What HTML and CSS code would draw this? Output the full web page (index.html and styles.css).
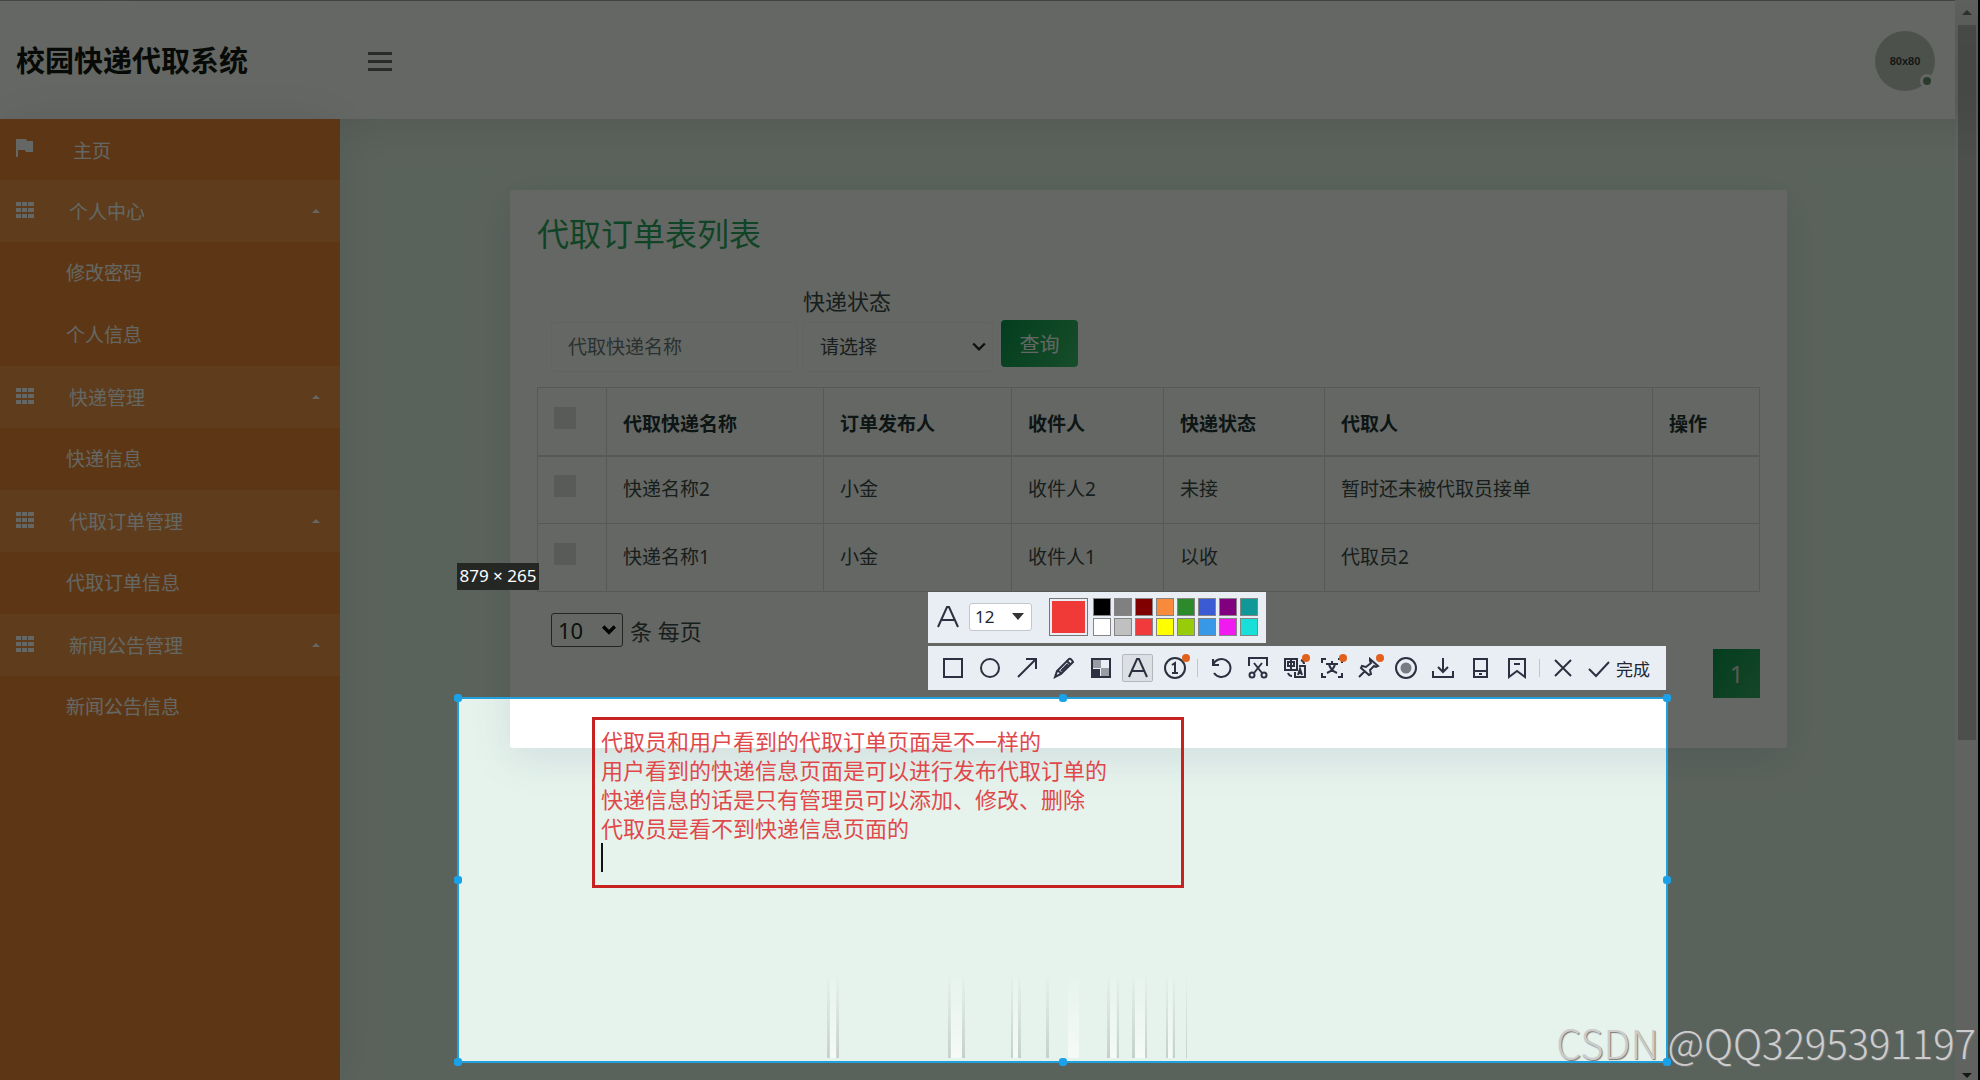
FILE: index.html
```html
<!DOCTYPE html>
<html lang="zh-CN">
<head>
<meta charset="utf-8">
<title>校园快递代取系统</title>
<link rel="stylesheet" href="styles.css">
</head>
<body>
<svg class="defs" width="0" height="0" aria-hidden="true">
  <symbol id="grid" viewBox="0 0 18 18"><path fill="currentColor" d="M0 1h5v4H0zM6 1h5v4H6zM12 1h6v4h-6zM0 7h5v4H0zM6 7h5v4H6zM12 7h6v4h-6zM0 13h5v4H0zM6 13h5v4H6zM12 13h6v4h-6z"/></symbol>
</svg>
<div class="window">
  <div class="app">
    <header class="topbar">
      <h1 class="brand">校园快递代取系统</h1>
      <button class="menu-toggle" aria-label="菜单"><span></span><span></span><span></span></button>
      <div class="avatar"><span class="avatar-text">80x80</span><span class="status"></span></div>
    </header>
    <div class="body">
      <nav class="sidebar">
        <a class="group home" href="#"><svg class="icon" viewBox="0 0 18 18"><path fill="currentColor" d="M0 0h10l1 2h6v11h-7l-1-2H2v7H0z"/></svg><span>主页</span></a>
        <a class="group" href="#"><svg class="icon"><use href="#grid"/></svg><span>个人中心</span><i class="caret"></i></a>
        <a class="sub" href="#">修改密码</a>
        <a class="sub" href="#">个人信息</a>
        <a class="group" href="#"><svg class="icon"><use href="#grid"/></svg><span>快递管理</span><i class="caret"></i></a>
        <a class="sub" href="#">快递信息</a>
        <a class="group" href="#"><svg class="icon"><use href="#grid"/></svg><span>代取订单管理</span><i class="caret"></i></a>
        <a class="sub" href="#">代取订单信息</a>
        <a class="group" href="#"><svg class="icon"><use href="#grid"/></svg><span>新闻公告管理</span><i class="caret"></i></a>
        <a class="sub" href="#">新闻公告信息</a>
      </nav>
      <main class="content">
        <section class="card">
          <h2 class="card-title">代取订单表列表</h2>
          <form class="filters">
            <input class="field name-field" type="text" placeholder="代取快递名称" aria-label="代取快递名称">
            <div class="state">
              <label for="state">快递状态</label>
              <div class="picker"><select class="field" id="state"><option>请选择</option></select><svg class="chevron" viewBox="0 0 12 8"><path d="M1 1l5 5 5-5"/></svg></div>
            </div>
            <button class="query" type="button">查询</button>
          </form>
          <table class="orders">
            <colgroup><col class="c1"><col class="c2"><col class="c3"><col class="c4"><col class="c5"><col class="c6"><col class="c7"></colgroup>
            <thead><tr><th><input type="checkbox" aria-label="全选"></th><th>代取快递名称</th><th>订单发布人</th><th>收件人</th><th>快递状态</th><th>代取人</th><th>操作</th></tr></thead>
            <tbody>
              <tr><td><input type="checkbox" aria-label="选择"></td><td>快递名称2</td><td>小金</td><td>收件人2</td><td>未接</td><td>暂时还未被代取员接单</td><td></td></tr>
              <tr><td><input type="checkbox" aria-label="选择"></td><td>快递名称1</td><td>小金</td><td>收件人1</td><td>以收</td><td>代取员2</td><td></td></tr>
            </tbody>
          </table>
          <div class="page-size">
            <div class="picker"><select id="size"><option>10</option></select><svg class="chevron" viewBox="0 0 12 8"><path d="M1 1l5 5 5-5"/></svg></div>
            <label for="size">条 每页</label>
          </div>
          <div class="pager"><button>1</button></div>
        </section>
      </main>
    </div>
  </div>
  <div class="scrollbar"><i class="up"></i><i class="thumb"></i><i class="down"></i></div>
</div>

<div class="capture">
  <svg class="streaks" viewBox="0 0 370 84">
    <defs>
      <linearGradient id="dark" x2="0" y2="1"><stop offset="0" stop-color="#8a938e" stop-opacity="0"/><stop offset="1" stop-color="#8a938e" stop-opacity=".36"/></linearGradient>
      <linearGradient id="light" x2="0" y2="1"><stop offset="0" stop-color="#fff" stop-opacity="0"/><stop offset="1" stop-color="#fff" stop-opacity=".6"/></linearGradient>
    </defs>
    <g fill="url(#light)"><path d="M9 0h8v84H9zM130 0h12v84h-12zM193 0h5v84h-5zM248 0h11v84h-11zM290 0h6v84h-6zM315 0h10v84h-10zM348 0h4v84h-4z"/></g>
    <g fill="url(#dark)"><path d="M7 0h3v84H7zM16 0h3v84h-3zM128 0h3v84h-3zM142 0h3v84h-3zM191 0h2v84h-2zM198 0h3v84h-3zM226 0h3v84h-3zM287 0h3v84h-3zM297 0h2v84h-2zM312 0h3v84h-3zM325 0h2v84h-2zM346 0h2v84h-2zM353 0h2v84h-2zM366 0h1v84h-1z"/></g>
  </svg>
  <i class="handle tl"></i><i class="handle tm"></i><i class="handle tr"></i><i class="handle ml"></i><i class="handle mr"></i><i class="handle bl"></i><i class="handle bm"></i><i class="handle br"></i>
  <span class="size-tag">879 × 265</span>
  <div class="note">
    <p>代取员和用户看到的代取订单页面是不一样的</p>
    <p>用户看到的快递信息页面是可以进行发布代取订单的</p>
    <p>快递信息的话是只有管理员可以添加、修改、删除</p>
    <p>代取员是看不到快递信息页面的</p>
    <i class="text-caret"></i>
  </div>
  <div class="tools">
    <div class="panel text-panel">
      <svg class="tool" viewBox="0 0 22 22"><path d="M1 21L10 1h2l9 20M5 14h12"/></svg>
      <div class="font-size"><select aria-label="字号"><option>12</option></select><i></i></div>
      <button class="current" aria-label="当前颜色"></button>
      <div class="swatches">
        <button class="s-black" aria-label="黑"></button><button class="s-gray" aria-label="灰"></button><button class="s-maroon" aria-label="深红"></button><button class="s-orange" aria-label="橙"></button><button class="s-green" aria-label="绿"></button><button class="s-blue" aria-label="蓝"></button><button class="s-purple" aria-label="紫"></button><button class="s-teal" aria-label="青"></button>
        <button class="s-white" aria-label="白"></button><button class="s-silver" aria-label="银"></button><button class="s-red" aria-label="红"></button><button class="s-yellow" aria-label="黄"></button><button class="s-lime" aria-label="黄绿"></button><button class="s-sky" aria-label="天蓝"></button><button class="s-pink" aria-label="粉"></button><button class="s-cyan" aria-label="浅青"></button>
      </div>
    </div>
    <div class="panel tool-panel">
      <button aria-label="矩形"><svg viewBox="0 0 22 22"><path d="M2 2h18v18H2z"/></svg></button>
      <button aria-label="椭圆"><svg viewBox="0 0 22 22"><circle cx="11" cy="11" r="9"/></svg></button>
      <button aria-label="箭头"><svg viewBox="0 0 22 22"><path d="M2 20L20 2M10 2h10v10"/></svg></button>
      <button aria-label="画笔"><svg viewBox="0 0 22 22"><path d="M2 20l2-6L16 2q2-1 4 3L8 17zM14 4l4 4M4 14q3 0 4 3M8 14l7-7"/></svg></button>
      <button aria-label="马赛克"><svg viewBox="0 0 22 22"><path class="soft" d="M2 2h9v9H2zM11 11h9v9h-9z"/><path d="M2 2h18v18H2z"/><path class="solid" d="M3 12h7v7H3z"/></svg></button>
      <button class="active" aria-label="文字"><svg viewBox="0 0 22 22"><path d="M2 20L10 2h2l8 18M5 14h12"/></svg></button>
      <button class="new" aria-label="序号"><svg viewBox="0 0 22 22"><circle cx="11" cy="11" r="10"/><path d="M8 8l3-2v10M8 16h6"/></svg></button>
      <i class="divider"></i>
      <button aria-label="撤销"><svg viewBox="0 0 22 22"><path d="M3 2v6h6M3 8a9 9 0 1 1 1 8"/></svg></button>
      <button aria-label="裁剪"><svg viewBox="0 0 22 22"><path d="M2 9V1h18v8M7 6l8 10M15 6L7 16"/><circle cx="5" cy="18" r="2.5"/><circle cx="17" cy="18" r="2.5"/></svg></button>
      <button class="new" aria-label="翻译"><svg viewBox="0 0 22 22"><path d="M1 2h12v11H1zM4 5h6v4H4zM7 3v9M15 9h6v11H11v-5M14 18l2-6 2 6M15 16h3M4 16q1 3 4 3M17 3q3 1 3 4"/></svg></button>
      <button class="new" aria-label="文字识别"><svg viewBox="0 0 22 22"><path d="M1 6V2h4M17 2h4v4M1 16v4h4M17 20h4v-4M11 4v3M5 7h12M8 7q1 6 8 9M14 7q-1 6-8 9"/></svg></button>
      <button class="new" aria-label="钉住"><svg viewBox="0 0 22 22"><path d="M12 2l8 7-2 1-2-1-4 4 1 4-2 1-8-7 1-2 4 1 5-4-1-2zM7 14l-6 6"/></svg></button>
      <button aria-label="录屏"><svg viewBox="0 0 22 22"><circle cx="11" cy="11" r="10"/><circle class="dot" cx="11" cy="11" r="5.5"/></svg></button>
      <button aria-label="下载"><svg viewBox="0 0 22 22"><path d="M11 1v14M6 10l5 5 5-5M1 14v6h20v-6"/></svg></button>
      <button aria-label="发送到手机"><svg viewBox="0 0 22 22"><path d="M5 2h13v18H5zM5 14h13M10 17h3"/></svg></button>
      <button aria-label="收藏"><svg viewBox="0 0 22 22"><path d="M3 2h16v18l-8-6-8 6zM8 7h6"/></svg></button>
      <i class="divider"></i>
      <button aria-label="关闭"><svg viewBox="0 0 22 22"><path d="M3 3l16 16M19 3L3 19"/></svg></button>
      <button class="done"><svg viewBox="0 0 22 22"><path d="M1 12l7 7L21 5"/></svg>完成</button>
    </div>
  </div>
</div>
<div class="watermark">CSDN @QQ3295391197</div>
</body>
</html>
```
FILE: styles.css
```css
* { box-sizing: border-box; }
body {
  margin: 0;
  position: relative;
  min-height: 100vh;
  overflow: hidden;
  font-family: "Noto Sans", "Noto Sans CJK SC", sans-serif;
  font-size: 19px;
  color: #3c454c;
}
button, input, select { font: inherit; color: inherit; }
button { padding: 0; border: 0; background: none; }
select { appearance: none; }
p, h1, h2 { margin: 0; }
.defs { position: absolute; }

/* page */
.window { display: flex; min-height: 100vh; background: #000; }
.app { flex: 1; display: flex; flex-direction: column; border-top: 1px solid #aaa; }
.topbar {
  position: relative;
  z-index: 1;
  display: flex;
  align-items: center;
  height: 118px;
  padding: 2px 20px 0 16px;
  background: #fff;
  box-shadow: 120px 10px 40px rgba(0, 0, 0, .09);
}
.brand { width: 352px; font-size: 29px; font-weight: 700; line-height: 40px; color: #111; }
.menu-toggle { display: grid; gap: 5px; width: 24px; }
.menu-toggle span { height: 3px; background: #666; }
.avatar {
  position: relative;
  display: grid;
  place-items: center;
  width: 60px;
  height: 60px;
  margin-left: auto;
  border-radius: 50%;
  background: #c4c6c4;
  font: 700 11px "Liberation Sans", sans-serif;
  color: #333;
}
.status {
  position: absolute;
  right: 1px;
  bottom: 3px;
  width: 14px;
  height: 14px;
  border: 3px solid #fff;
  border-radius: 50%;
  background: #6b8f78;
}
.body { flex: 1; display: flex; }
.sidebar { position: relative; z-index: 2; width: 340px; background: #ee8336; box-shadow: 0 0 50px rgba(0, 0, 0, .08); color: #fff; }
.sidebar a { display: flex; align-items: center; color: inherit; text-decoration: none; }
.group { height: 62px; padding: 0 20px 0 16px; background: #f0914a; }
.group span { margin-left: 35px; }
.home { height: 61px; background: none; }
.home span { margin-left: 39px; }
.icon { width: 18px; height: 18px; margin-bottom: 3px; }
.caret { margin-left: auto; border: 4px solid transparent; border-top: 0; border-bottom-color: currentColor; }
.sub { height: 62px; padding: 0 0 2px 66px; }
.content { flex: 1; padding: 71px 168px 0 170px; background: #e6f3ec; }
.card { min-height: 558px; padding: 20px 27px; background: #fff; box-shadow: 0 10px 40px rgba(80, 100, 150, .14); border-radius: 3px; }
.card-title { border-bottom: 1px solid #f9fafa; font-size: 32px; font-weight: 400; line-height: 47px; color: #2ba562; }
.filters { display: flex; align-items: flex-end; height: 114px; padding-left: 14px; }
.field { height: 50px; padding: 0 16px; border: 1px solid #f5f5f5; border-radius: 4px; background: #fff; }
.name-field { width: 246px; margin-right: 6px; }
.name-field::placeholder { color: #6c757d; opacity: 1; }
.state label { display: block; font-size: 22px; line-height: 42px; }
.picker { position: relative; }
.picker select { width: 100%; }
.chevron { position: absolute; right: 7px; top: 50%; width: 14px; height: 10px; margin-top: -5px; fill: none; stroke: #222; stroke-width: 2; pointer-events: none; }
.state { width: 190px; margin-right: 8px; }
.query { width: 77px; height: 47px; margin-bottom: 5px; border-radius: 4px; background: linear-gradient(120deg, #07954f, #38bd6c); font-size: 20px; color: #fff; }
.orders { width: 100%; margin-top: 15px; table-layout: fixed; border-collapse: collapse; text-align: left; }
.c1 { width: 69px; } .c2 { width: 217px; } .c3 { width: 188px; } .c4 { width: 152px; } .c5 { width: 161px; } .c7 { width: 107px; }
.orders th, .orders td { height: 68px; padding: 0 16px 4px; border: 1px solid #d9dde0; }
.orders th { padding: 4px 16px 0; border-bottom-width: 2px; font-weight: 700; color: #222c36; }
.orders input { display: block; appearance: none; width: 22px; height: 22px; margin: 0 0 4px; background: #dfe1e3; }
.orders th input { margin-bottom: 10px; }
.page-size { display: flex; align-items: center; gap: 7px; margin-top: 21px; padding-left: 14px; font-size: 22px; }
.page-size .picker { width: 72px; }
.page-size select { display: block; height: 34px; padding: 0 6px; border: 1px solid #555; border-radius: 3px; background: #fff; color: #222; }
.page-size .chevron { stroke: #000; stroke-width: 3; }
.pager { display: flex; justify-content: flex-end; margin-top: 2px; }
.pager button { width: 47px; height: 49px; background: linear-gradient(120deg, #07954f, #38a868); font-size: 24px; color: #ddd; }
.scrollbar { display: flex; flex-direction: column; align-items: center; width: 23px; margin-right: 2px; background: #f4f4f4; }
.scrollbar i { border: 5px solid transparent; }
.scrollbar .up { margin-top: 10px; border-top: 0; border-bottom-color: #777; }
.scrollbar .thumb { width: 18px; height: 715px; margin-top: 10px; border: 0; background: #c1c1c1; }
.scrollbar .down { margin: auto 0 2px; border-bottom: 0; border-top-color: #333; }

/* screenshot selection floating above the page */
.capture {
  position: absolute;
  z-index: 5;
  left: 457px;
  top: 697px;
  width: 1211px;
  height: 366px;
  border: 2px solid #21a0dc;
  box-shadow: 0 0 0 3000px rgba(2, 6, 0, .61);
}
.handle { position: absolute; width: 8px; height: 8px; border-radius: 3px; background: #1ba1e8; }
.tl, .tm, .tr { top: -5px; }
.bl, .bm, .br { bottom: -5px; }
.ml, .mr { top: calc(50% - 4px); }
.tl, .ml, .bl { left: -5px; }
.tr, .mr, .br { right: -5px; }
.tm, .bm { left: calc(50% - 4px); }
.size-tag { position: absolute; left: -2px; top: -136px; width: 82px; padding-bottom: 2px; background: #252725; color: #fff; font-size: 17px; line-height: 25px; text-align: center; white-space: nowrap; }
.streaks { position: absolute; left: 361px; bottom: 3px; width: 370px; height: 84px; }
.note { position: absolute; left: 133px; top: 18px; width: 592px; height: 171px; padding: 7px 6px; border: 3px solid #c62222; color: #e0484a; font-size: 22px; line-height: 29px; }
.text-caret { display: block; width: 2px; height: 29px; background: #111; }
.tools { position: absolute; right: 0; bottom: calc(100% + 9px); width: 738px; display: grid; gap: 3px; }
.panel { display: flex; align-items: center; background: #e9eef4; color: #222633; }
.panel svg { display: block; width: 22px; height: 22px; fill: none; stroke: #2c3040; stroke-width: 2; }
.text-panel { width: 338px; height: 51px; padding: 0 0 2px 9px; }
.font-size { position: relative; width: 63px; height: 28px; margin: 0 17px 0 10px; }
.font-size select { width: 100%; height: 28px; padding: 0 5px; border: 1px solid #c4c8ce; border-radius: 3px; background: #fff; font-size: 17px; line-height: 24px; }
.font-size i { position: absolute; right: 8px; top: 10px; border: 6px solid transparent; border-top: 7px solid #333; border-bottom: 0; }
.current { width: 39px; height: 38px; border: 1px solid #777; background: #f03a38; box-shadow: inset 0 0 0 2px #e9eef4; }
.swatches { display: grid; grid-template-columns: repeat(8, 18px); gap: 2px 3px; margin-left: 5px; }
.swatches button { height: 18px; border: 1px solid #858585; }
.s-black { background: #000; } .s-gray { background: #808080; } .s-maroon { background: #800000; } .s-orange { background: #f78b3b; }
.s-green { background: #2c8a2c; } .s-blue { background: #3a5bd4; } .s-purple { background: #800080; } .s-teal { background: #109898; }
.s-white { background: #fff; } .s-silver { background: #c0c0c0; } .s-red { background: #f03a3c; } .s-yellow { background: #ff0; }
.s-lime { background: #98cc08; } .s-sky { background: #3898e8; } .s-pink { background: #f01af0; } .s-cyan { background: #18e0d8; }
.tool-panel { height: 44px; padding: 0 10px 0 9px; }
.tool-panel button { position: relative; display: grid; place-items: center; flex: none; width: 31px; height: 28px; margin-right: 6px; }
.tool-panel .active { border: 1px solid #b4b8be; border-radius: 2px; background: #dcdfe4; }
.tool-panel .new::after { content: ""; position: absolute; right: 0; top: 0; width: 8px; height: 8px; border-radius: 50%; background: #e0601c; }
.tool-panel .solid { fill: #2c3040; stroke: none; }
.tool-panel .soft { fill: #999ca4; stroke: none; }
.tool-panel .dot { fill: #777b84; stroke: none; }
.divider { width: 1px; height: 18px; margin: 0 7px 0 1px; background: #c2c6cc; }
.tool-panel .done { display: flex; align-items: center; gap: 6px; width: auto; margin: 0 0 0 4px; font-size: 17px; }
.watermark { position: absolute; z-index: 6; right: 4px; bottom: 10px; font: 300 40px/56px "Noto Sans CJK SC", sans-serif; color: #ccc; text-shadow: 1px 1px 1px #777; }
```
